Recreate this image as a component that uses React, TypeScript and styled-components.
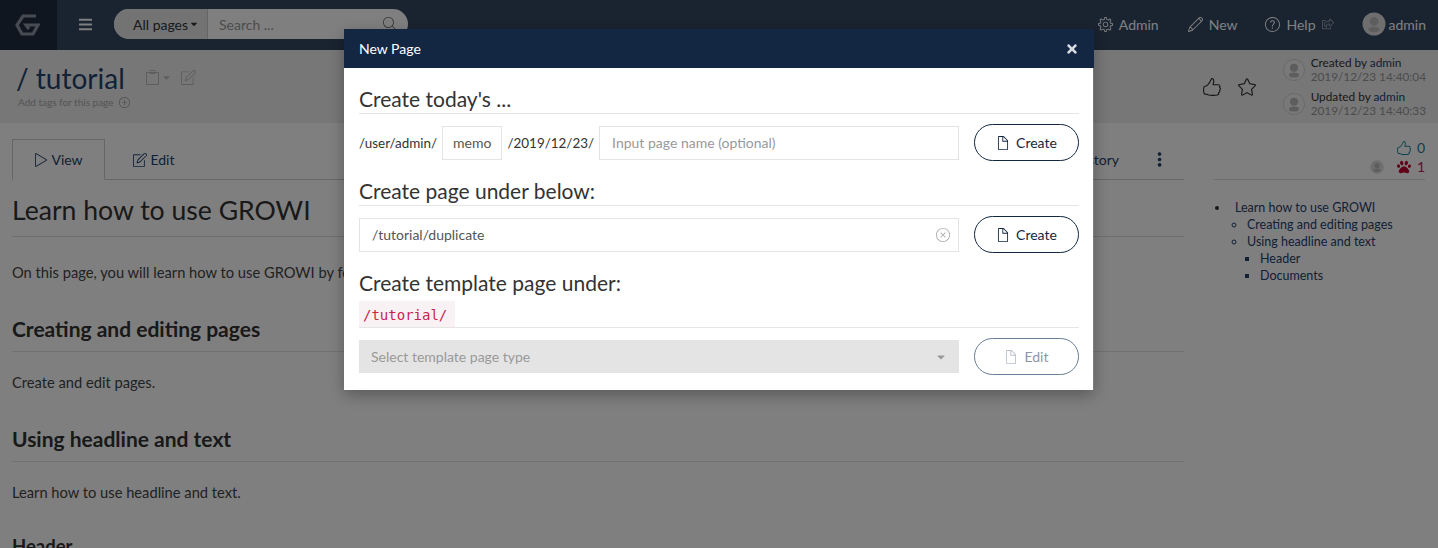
import React from 'react'
import styled, { createGlobalStyle } from 'styled-components'
import {
  SlLike,
  SlStar,
  SlNote,
  SlControlPlay,
  SlPencil,
  SlSettings,
  SlQuestion,
  SlDoc,
  SlMagnifier,
  SlPlus,
  SlClose,
  SlOptionsVertical,
} from 'react-icons/sl'
import { FaBars, FaPaw, FaRegShareSquare, FaCaretDown, FaTimes } from 'react-icons/fa'

const navy = '#24426e'

const GlobalStyle = createGlobalStyle`
  html, body {
    margin: 0;
    height: 100%;
    overflow: hidden;
    background: #fff;
    font-family: Lato, "Liberation Sans", sans-serif;
    font-size: 14px;
    color: #4a4a4a;
  }
  * { box-sizing: border-box; }
`

const Page = styled.div`
  width: 1438px;
  height: 548px;
  overflow: hidden;
`

const Navbar = styled.header`
  height: 50px;
  background: #344660;
  display: flex;
  align-items: center;
  color: #fff;
`

const LogoBox = styled.div`
  width: 57px;
  height: 50px;
  padding-right: 4px;
  background: #202c3e;
  display: flex;
  align-items: center;
  justify-content: center;
`

const Burger = styled.div`
  width: 57px;
  display: flex;
  justify-content: center;
  margin-bottom: 2px;
  font-size: 15px;
  color: #fff;
`

const SearchBox = styled.div`
  width: 294px;
  height: 30px;
  margin-bottom: 2px;
  border-radius: 15px;
  overflow: hidden;
  display: flex;
  background: #fff;
`

const ScopeButton = styled.div`
  width: 94px;
  padding-left: 19px;
  background: #e6e6e6;
  border-right: 1px solid #ccc;
  display: flex;
  align-items: center;
  gap: 1px;
  color: #333;
  font-size: 14px;
`

const SearchField = styled.div`
  flex: 1;
  padding: 0 11px;
  display: flex;
  align-items: center;
  justify-content: space-between;
  color: #999;
  font-size: 14px;
  svg {
    color: #666;
    font-size: 14px;
  }
`

const NavRight = styled.nav`
  margin-left: auto;
  margin-bottom: 2px;
  display: flex;
  align-items: center;
  color: #fff;
`

const NavItem = styled.div<{ $gap: number }>`
  display: flex;
  align-items: center;
  gap: 6px;
  margin-right: ${(p) => p.$gap}px;
  font-size: 14px;
  svg {
    font-size: 15px;
  }
`

const MutedIcon = styled.span`
  display: flex;
  opacity: 0.45;
  svg {
    font-size: 12px;
  }
`

const UserItem = styled.div`
  display: flex;
  align-items: center;
  gap: 3px;
  margin-right: 12px;
  font-size: 14px;
`

const SubHeader = styled.section`
  height: 73px;
  background: #eeeeee;
  display: flex;
  justify-content: space-between;
  padding: 11px 12px 0 16px;
`

const TitleBlock = styled.div`
  display: flex;
  flex-direction: column;
`

const TitleRow = styled.div`
  display: flex;
  align-items: center;
  height: 32px;
`

const PageTitle = styled.h1`
  margin: 1px 0 0;
  font-size: 28px;
  font-weight: 400;
  line-height: 32px;
  color: ${navy};
`

const TitleTools = styled.div`
  display: flex;
  align-items: center;
  color: #bbb;
  margin-left: 21px;
  gap: 2px;
`

const EditTool = styled.span`
  display: flex;
  margin-left: 7px;
  font-size: 15px;
`

const TagLine = styled.div`
  display: flex;
  align-items: center;
  gap: 5px;
  margin: 3px 0 0 2px;
  font-size: 10px;
  color: #aaa;
  svg {
    font-size: 11px;
    color: #999;
  }
`

const Actions = styled.div`
  display: flex;
  align-items: flex-start;
`

const Reactions = styled.div`
  display: flex;
  gap: 17px;
  margin-top: 17px;
  margin-right: 27px;
  font-size: 18px;
  color: #333;
`

const Authors = styled.div`
  display: flex;
  flex-direction: column;
  gap: 4px;
  margin-top: -6px;
`

const Author = styled.div`
  display: flex;
  align-items: center;
  gap: 6px;
  height: 30px;
`

const AuthorText = styled.div`
  font-size: 11.8px;
  line-height: 14px;
  color: #333;
`

const AuthorLink = styled.span`
  color: ${navy};
`

const AuthorDate = styled.div`
  color: #999;
`

const Body = styled.main`
  display: flex;
  align-items: flex-start;
  background: #fff;
  padding: 16px 13px 0 12px;
`

const ContentColumn = styled.div`
  width: 1172px;
  flex: none;
`

const Tabs = styled.div`
  height: 41px;
  display: flex;
  border-bottom: 1px solid #ccc;
`

const Tab = styled.div<{ $active?: boolean }>`
  width: ${(p) => (p.$active ? 93 : 98)}px;
  height: ${(p) => (p.$active ? 41 : 40)}px;
  display: flex;
  align-items: center;
  justify-content: center;
  gap: 3px;
  font-size: 14px;
  color: ${navy};
  background: #fff;
  border: 1px solid ${(p) => (p.$active ? '#ccc' : 'transparent')};
  border-bottom: ${(p) => (p.$active ? '1px solid #fff' : 'none')};
  svg {
    font-size: 14px;
  }
`

const TabEnd = styled.div`
  margin-left: auto;
  display: flex;
  align-items: center;
  height: 40px;
  color: ${navy};
  font-size: 14px;
`

const DotsButton = styled.span`
  display: flex;
  margin-left: 33px;
  margin-right: 17px;
  font-size: 15px;
`

const Wiki = styled.article`
  color: #333;
`

const H1 = styled.h1`
  margin: 13px 0 25px;
  padding-bottom: 9px;
  border-bottom: 1px solid #ddd;
  font-size: 26.6px;
  line-height: 34px;
  font-weight: 400;
  color: #333;
`

const H2 = styled.h2`
  margin: 0 0 20px;
  padding-bottom: 9px;
  border-bottom: 1px solid #e4e4e4;
  font-size: 21px;
  line-height: 26px;
  font-weight: 700;
  color: #333;
`

const H3 = styled(H2)`
  margin-top: -3px;
  font-size: 18.5px;
`

const P = styled.p`
  margin: 0 0 33px;
  font-size: 14.7px;
  line-height: 21px;
  color: #444;
`

const SideColumn = styled.aside`
  flex: 1;
  margin-left: 30px;
`

const Counters = styled.div`
  height: 41px;
  padding-bottom: 3px;
  border-bottom: 1px solid #ddd;
  display: flex;
  flex-direction: column;
  align-items: flex-end;
  justify-content: flex-end;
  line-height: 19px;
  font-size: 14px;
`

const Counter = styled.div<{ $color: string }>`
  display: flex;
  align-items: center;
  gap: 6px;
  color: ${(p) => p.$color};
`

const CounterAvatar = styled.span`
  display: flex;
  margin-right: 7px;
`

const Toc = styled.ul`
  margin: 19px 0 0;
  padding-left: 21px;
  font-size: 12.5px;
  line-height: 17px;
  color: ${navy};
  list-style: none;
  > li {
    position: relative;
  }
  > li::before {
    content: '';
    position: absolute;
    left: -20px;
    top: 7px;
    width: 4px;
    height: 4px;
    border-radius: 50%;
    background: #333;
  }
  ul {
    margin: 0;
    padding-left: 12px;
    list-style: circle;
  }
  ul ul {
    padding-left: 13px;
    list-style: square;
  }
`

const Overlay = styled.div`
  position: fixed;
  inset: 0;
  background: rgba(0, 0, 0, 0.5);
  display: flex;
  justify-content: center;
  align-items: flex-start;
  padding-top: 29px;
`

const Modal = styled.div`
  width: 750px;
  box-shadow: 0 5px 15px rgba(0, 0, 0, 0.3);
`

const ModalHeader = styled.div`
  height: 39px;
  background: #132743;
  color: #fff;
  display: flex;
  align-items: center;
  justify-content: space-between;
  padding: 0 15px;
  font-size: 14px;
`

const CloseIcon = styled.span`
  display: flex;
  color: #d8dde4;
  font-size: 14px;
`

const ModalBody = styled.div`
  width: 749px;
  height: 322px;
  background: #fff;
  padding: 18px 14px 0 15px;
`

const Section = styled.section`
  margin-bottom: 17px;
`

const SectionTitle = styled.h4`
  margin: 0 0 11px;
  border-bottom: 1px solid #e5e5e5;
  padding-bottom: 1px;
  font-size: 21px;
  line-height: 26px;
  font-weight: 400;
  color: #333;
`

const CodeTitle = styled(SectionTitle)`
  height: 58px;
  padding-bottom: 0;
`

const CodeChip = styled.code`
  display: block;
  width: 96px;
  height: 26px;
  margin-top: 5px;
  padding: 0 4px;
  background: #f9f2f4;
  color: #c7254e;
  font-family: "DejaVu Sans Mono", "Liberation Mono", monospace;
  font-size: 14px;
  line-height: 28px;
`

const Row = styled.div`
  display: flex;
  align-items: center;
  height: 37px;
  margin-top: -1px;
`

const Fields = styled.div`
  width: 600px;
  display: flex;
  align-items: center;
  gap: 5px;
`

const PathText = styled.span`
  font-size: 13.45px;
  color: #333;
`

const Field = styled.div<{ $grow?: boolean; $muted?: boolean }>`
  height: 34px;
  flex: ${(p) => (p.$grow ? 1 : 'none')};
  border: 1px solid #e4e4e4;
  padding: 0 ${(p) => (p.$grow ? 12 : 10)}px;
  display: flex;
  align-items: center;
  justify-content: space-between;
  font-size: 14px;
  color: ${(p) => (p.$muted ? '#999' : '#555')};
  background: #fff;
`

const ClearIcon = styled.span`
  display: flex;
  margin-right: -4px;
  font-size: 14px;
  color: #aaa;
`

const SelectBox = styled.div`
  width: 600px;
  height: 33px;
  background: #e4e4e4;
  color: #999;
  font-size: 14px;
  display: flex;
  align-items: center;
  justify-content: space-between;
  padding: 0 12px 0 12px;
  svg {
    font-size: 12px;
    color: #999;
  }
`

const PillButton = styled.div<{ $disabled?: boolean }>`
  width: 105px;
  height: 37px;
  margin-left: 15px;
  border: 1px solid ${(p) => (p.$disabled ? '#6b7d99' : '#132743')};
  border-radius: 19px;
  display: flex;
  align-items: center;
  justify-content: center;
  gap: 6px;
  font-size: 14px;
  color: ${(p) => (p.$disabled ? '#8a96a8' : '#132743')};
  svg {
    font-size: 14px;
    opacity: ${(p) => (p.$disabled ? 0.6 : 1)};
  }
`

const Logo = () => (
  <svg width="26" height="24" viewBox="0 0 26 24" fill="none" stroke="#8c97a5" strokeWidth="3.2">
    <path d="M22 3H9L3 12l5 9h11l5-9H12l3 4" strokeLinejoin="miter" />
  </svg>
)

const ClipboardIcon = () => (
  <svg width="13" height="15" viewBox="0 0 13 15" fill="none" stroke="#bbb" strokeWidth="1">
    <rect x="0.5" y="2.5" width="12" height="12" />
    <rect x="3.5" y="0.5" width="6" height="3" rx="1" />
  </svg>
)

const Avatar = ({ size, filled }: { size: number; filled?: boolean }) => (
  <svg width={size} height={size} viewBox="0 0 24 24">
    <circle cx="12" cy="12" r="11.5" fill={filled ? '#dddddd' : '#f3f3f3'} stroke={filled ? 'none' : '#cfcfcf'} />
    <circle cx="12" cy="9.5" r="4.4" fill="#bbbbbb" />
    <ellipse cx="12" cy="17.5" rx="5.6" ry="2.8" fill="#bbbbbb" />
  </svg>
)

const CreateButton = ({ label, disabled }: { label: string; disabled?: boolean }) => (
  <PillButton $disabled={disabled}>
    <SlDoc />
    {label}
  </PillButton>
)

export default function App() {
  return (
    <Page>
      <GlobalStyle />
      <Navbar>
        <LogoBox>
          <Logo />
        </LogoBox>
        <Burger>
          <FaBars />
        </Burger>
        <SearchBox>
          <ScopeButton>
            All pages
            <FaCaretDown size={10} />
          </ScopeButton>
          <SearchField>
            Search ...
            <SlMagnifier />
          </SearchField>
        </SearchBox>
        <NavRight>
          <NavItem $gap={29}>
            <SlSettings />
            Admin
          </NavItem>
          <NavItem $gap={28}>
            <SlPencil />
            New
          </NavItem>
          <NavItem $gap={28}>
            <SlQuestion />
            Help
            <MutedIcon>
              <FaRegShareSquare />
            </MutedIcon>
          </NavItem>
          <UserItem>
            <Avatar size={24} filled />
            admin
          </UserItem>
        </NavRight>
      </Navbar>

      <SubHeader>
        <TitleBlock>
          <TitleRow>
            <PageTitle>/ tutorial</PageTitle>
            <TitleTools>
              <ClipboardIcon />
              <FaCaretDown size={11} />
              <EditTool>
                <SlNote />
              </EditTool>
            </TitleTools>
          </TitleRow>
          <TagLine>
            Add tags for this page
            <SlPlus />
          </TagLine>
        </TitleBlock>
        <Actions>
          <Reactions>
            <SlLike />
            <SlStar />
          </Reactions>
          <Authors>
            <Author>
              <Avatar size={22} />
              <AuthorText>
                Created by <AuthorLink>admin</AuthorLink>
                <AuthorDate>2019/12/23 14:40:04</AuthorDate>
              </AuthorText>
            </Author>
            <Author>
              <Avatar size={22} />
              <AuthorText>
                Updated by <AuthorLink>admin</AuthorLink>
                <AuthorDate>2019/12/23 14:40:33</AuthorDate>
              </AuthorText>
            </Author>
          </Authors>
        </Actions>
      </SubHeader>

      <Body>
        <ContentColumn>
          <Tabs>
            <Tab $active>
              <SlControlPlay />
              View
            </Tab>
            <Tab>
              <SlNote />
              Edit
            </Tab>
            <TabEnd>
              History
              <DotsButton>
                <SlOptionsVertical />
              </DotsButton>
            </TabEnd>
          </Tabs>
          <Wiki>
            <H1>Learn how to use GROWI</H1>
            <P>On this page, you will learn how to use GROWI by following the steps.</P>
            <H2>Creating and editing pages</H2>
            <P>Create and edit pages.</P>
            <H2>Using headline and text</H2>
            <P>Learn how to use headline and text.</P>
            <H3>Header</H3>
          </Wiki>
        </ContentColumn>
        <SideColumn>
          <Counters>
            <Counter $color="#1a7f9c">
              <SlLike />0
            </Counter>
            <Counter $color="#c2185b">
              <CounterAvatar>
                <Avatar size={14} filled />
              </CounterAvatar>
              <FaPaw color="#c2002f" />1
            </Counter>
          </Counters>
          <Toc>
            <li>
              Learn how to use GROWI
              <ul>
                <li>Creating and editing pages</li>
                <li>
                  Using headline and text
                  <ul>
                    <li>Header</li>
                    <li>Documents</li>
                  </ul>
                </li>
              </ul>
            </li>
          </Toc>
        </SideColumn>
      </Body>

      <Overlay>
        <Modal>
          <ModalHeader>
            New Page
            <CloseIcon>
              <FaTimes />
            </CloseIcon>
          </ModalHeader>
          <ModalBody>
            <Section>
              <SectionTitle>Create today's ...</SectionTitle>
              <Row>
                <Fields>
                  <PathText>/user/admin/</PathText>
                  <Field>memo</Field>
                  <PathText>/2019/12/23/</PathText>
                  <Field $grow $muted>
                    Input page name (optional)
                  </Field>
                </Fields>
                <CreateButton label="Create" />
              </Row>
            </Section>
            <Section>
              <SectionTitle>Create page under below:</SectionTitle>
              <Row>
                <Fields>
                  <Field $grow>
                    /tutorial/duplicate
                    <ClearIcon>
                      <SlClose />
                    </ClearIcon>
                  </Field>
                </Fields>
                <CreateButton label="Create" />
              </Row>
            </Section>
            <Section>
              <CodeTitle>
                Create template page under:
                <CodeChip>/tutorial/</CodeChip>
              </CodeTitle>
              <Row>
                <SelectBox>
                  Select template page type
                  <FaCaretDown />
                </SelectBox>
                <CreateButton label="Edit" disabled />
              </Row>
            </Section>
          </ModalBody>
        </Modal>
      </Overlay>
    </Page>
  )
}
